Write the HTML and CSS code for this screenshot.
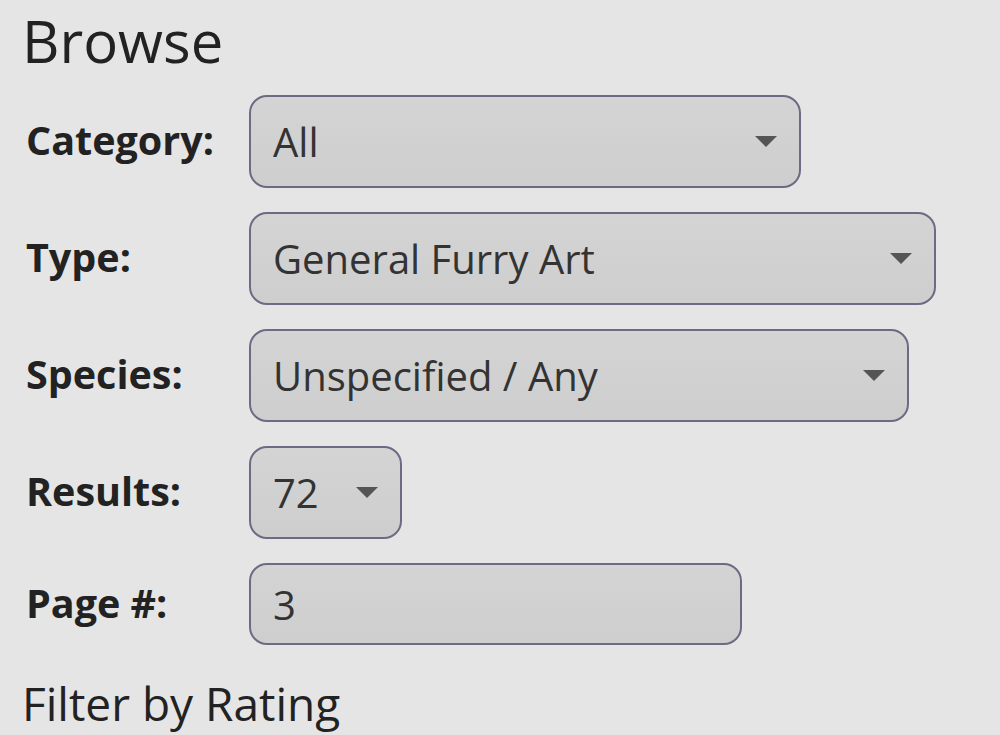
FILE: index.html
```html
<!DOCTYPE html>
<html lang="en">
<head>
  <meta charset="UTF-8" />
  <title>Browse</title>
  <link rel="stylesheet" href="styles.css">
</head>
<body>
  <div class="browse-panel">
    <h2>Browse</h2>

    <div class="browse-form">
      <label for="cat">Category:</label>
      <div class="select-wrap sw-cat">
        <select id="cat"><option>All</option></select>
        <svg class="caret" viewBox="0 0 22 11"><path d="M0 0 H22 L11 11 Z"/></svg>
      </div>

      <label for="atype">Type:</label>
      <div class="select-wrap sw-type">
        <select id="atype"><option>General Furry Art</option></select>
        <svg class="caret" viewBox="0 0 22 11"><path d="M0 0 H22 L11 11 Z"/></svg>
      </div>

      <label for="species">Species:</label>
      <div class="select-wrap sw-species">
        <select id="species"><option>Unspecified / Any</option></select>
        <svg class="caret" viewBox="0 0 22 11"><path d="M0 0 H22 L11 11 Z"/></svg>
      </div>

      <label for="perpage">Results:</label>
      <div class="select-wrap sw-results">
        <select id="perpage"><option>72</option></select>
        <svg class="caret" viewBox="0 0 22 11"><path d="M0 0 H22 L11 11 Z"/></svg>
      </div>

      <label for="page">Page #:</label>
      <input type="text" id="page" class="page-input" value="3" />
    </div>

    <h3>Filter by Rating</h3>
  </div>
</body>
</html>
```

FILE: styles.css
```css
* {
  box-sizing: border-box;
  margin: 0;
  padding: 0;
}

body {
  font-family: 'Open Sans', sans-serif;
  background-color: #e5e5e5;
  color: #222;
  padding: 0 22px;
}

/* Heading */
h2 {
  font-size: 58px;
  font-weight: 400;
  line-height: 70px;
  margin-top: 6px;
  margin-bottom: 19px;
}

/* Form grid */
.browse-form {
  display: grid;
  grid-template-columns: 227px auto;
  row-gap: 24px;
  align-items: center;
  justify-items: start;
}

label {
  font-size: 39.5px;
  font-weight: 700;
  padding-left: 4px;
  margin-top: -3px;
}

.select-wrap {
  position: relative;
}

select,
.page-input {
  appearance: none;
  -webkit-appearance: none;
  font-family: inherit;
  font-size: 40px;
  color: #333;
  height: 93px;
  padding: 0 22px;
  border: 2px solid #6c6b84;
  border-radius: 18px;
  background: linear-gradient(#d4d4d4, #cecece);
  outline: none;
  display: block;
}

.sw-cat select { width: 552px; }
.sw-type select { width: 687px; }
.sw-species select { width: 660px; }
.sw-results select { width: 153px; }

.page-input {
  width: 493px;
  height: 82px;
}

.caret {
  position: absolute;
  right: 24px;
  top: 41px;
  width: 22px;
  height: 11px;
  fill: #555;
  pointer-events: none;
}

h3 {
  font-size: 46px;
  font-weight: 400;
  margin-top: 27px;
  padding-left: 0;
}
```
